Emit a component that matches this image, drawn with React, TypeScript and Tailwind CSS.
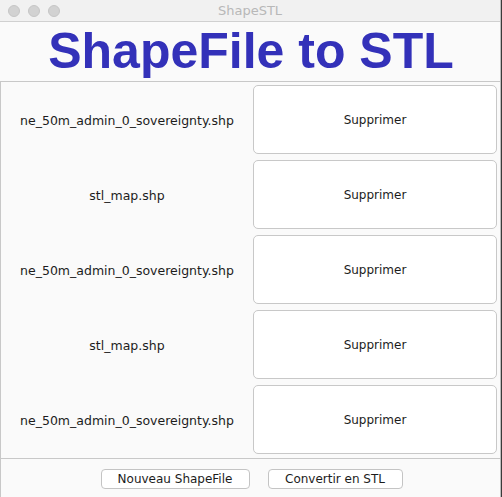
const files = [
  "ne_50m_admin_0_sovereignty.shp",
  "stl_map.shp",
  "ne_50m_admin_0_sovereignty.shp",
  "stl_map.shp",
  "ne_50m_admin_0_sovereignty.shp",
];

function TrafficLight() {
  return <span className="w-[12px] h-[12px] rounded-full bg-[#d2d2d2] border border-[#c6c6c6]" />;
}

export default function App() {
  return (
    <div className="w-[502px] h-[497px] bg-[#3a3a3a] overflow-hidden" style={{ fontFamily: '"DejaVu Sans", sans-serif' }}>
      <div className="w-[501px] h-full flex flex-col bg-[#fafafa] border-r border-[#bdbdbd]">
        {/* title bar */}
        <div className="h-[22px] flex items-center relative bg-[#f1f1f1] border-b border-[#d0d0d0] shrink-0">
          <div className="flex gap-[8px] pl-[8px]">
            <TrafficLight />
            <TrafficLight />
            <TrafficLight />
          </div>
          <div className="absolute inset-0 flex items-center justify-center text-[13px] text-[#b8b8b8]">ShapeSTL</div>
        </div>

        {/* header */}
        <div className="h-[60px] flex items-center justify-center border-b border-[#c8c8c8] shrink-0">
          <span
            className="text-[50px] font-bold leading-none text-[#3331b9] pb-[2px] pl-[2px]"
            style={{ fontFamily: '"Liberation Sans", Arial, sans-serif' }}
          >
            ShapeFile to STL
          </span>
        </div>

        {/* file list */}
        <div className="flex flex-col border-l border-[#c8c8c8] border-b h-[377px] shrink-0">
          {files.map((name, i) => (
            <div key={i} className="h-[75px] flex items-center">
              <div className="w-[252px] text-center text-[12.5px] text-[#1c1c1c] pt-[4px]">{name}</div>
              <button className="w-[244px] h-[69px] bg-white border border-[#c8c8c8] rounded-[5px] text-[12px] text-[#1c1c1c]">
                Supprimer
              </button>
            </div>
          ))}
        </div>

        {/* footer */}
        <div className="flex-1 flex justify-center items-start gap-[18px] pt-[10px] pl-[2px] border-l border-[#c8c8c8]">
          <button className="w-[149px] h-[20px] bg-white border border-[#c4c4c4] rounded-[4px] text-[12px] text-[#1c1c1c] leading-none">
            Nouveau ShapeFile
          </button>
          <button className="w-[135px] h-[20px] bg-white border border-[#c4c4c4] rounded-[4px] text-[12px] text-[#1c1c1c] leading-none">
            Convertir en STL
          </button>
        </div>
      </div>
    </div>
  );
}
